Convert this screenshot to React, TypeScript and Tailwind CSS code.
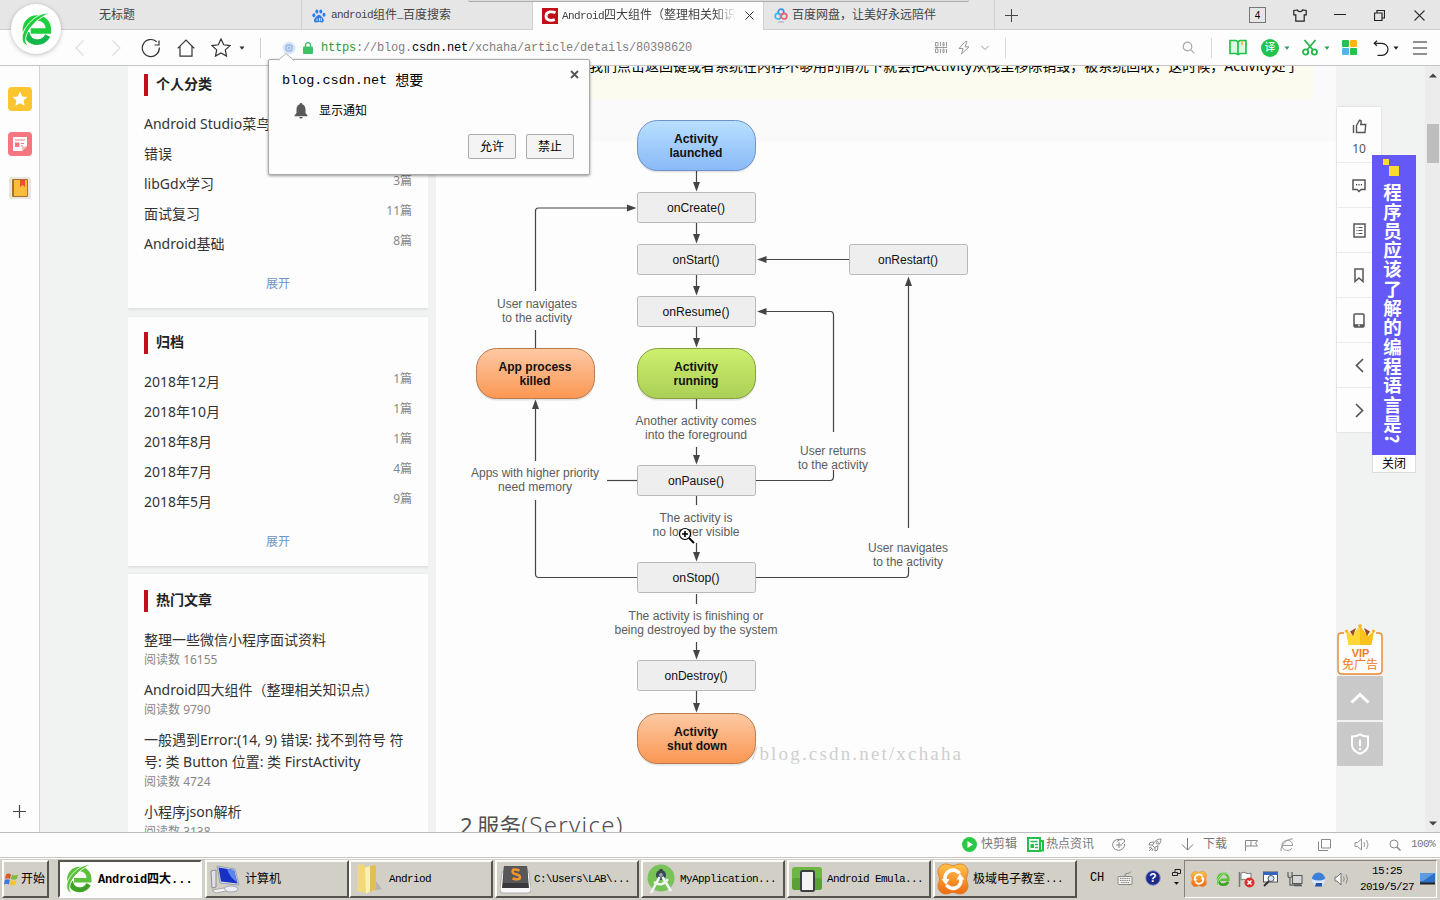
import React from 'react';

const SONG = 'font-["Liberation_Mono","Noto_Sans_CJK_SC",monospace]';
const YAHEI = 'font-["Noto_Sans","Noto_Sans_CJK_SC",sans-serif]';

function Caret({ className = 'text-[#333]' }: { className?: string }) {
  return (
    <svg width="6" height="4" viewBox="0 0 6 4" className={`shrink-0 ${className}`}>
      <path d="M0.5 0.5h5L3 3.8z" fill="currentColor" />
    </svg>
  );
}

/* ---------- logos ---------- */

function Browser360({ size, light = '#2bc83c', dark = '#12b04a' }: { size: number; light?: string; dark?: string }) {
  return (
    <svg width={size} height={size} viewBox="0 0 36 36" className="shrink-0" fill="none">
      <path d="M29.5 24.5C27 29 23 31 18.500 31C11.500 31 6.500 25.500 6.500 18.500C6.500 11.500 11.500 6 18.500 6C25.500 6 30.500 11 30.300 19.500H12" stroke={light} strokeWidth="5.500" />
      <path d="M8 21c1 6 5 10 11 10c4.500 0 8-2 10.500-6.500" stroke={dark} strokeWidth="5.500" />
      <path d="M31 1.500C22-1 6 12 3.500 24C2.500 30 4.500 34 9.500 34.500C6.500 32 6 28 8 23C12 13 22 5 31 1.500z" fill={light} stroke="#fff" strokeWidth="1" />
    </svg>
  );
}

function Paw() {
  return (
    <svg width="14" height="14" viewBox="0 0 14 14" fill="#2f7be8" className="shrink-0">
      <ellipse cx="1.900" cy="6.300" rx="1.500" ry="2" />
      <ellipse cx="4.800" cy="2.600" rx="1.500" ry="2.100" />
      <ellipse cx="8.800" cy="2.500" rx="1.500" ry="2.100" />
      <ellipse cx="12" cy="5.800" rx="1.500" ry="2" />
      <path d="M7 5.800c1.500 0 2.200 1.500 3.400 2.600c2.200 2 1.800 5-.8 5.100c-1.300 0-1.500-.4-2.600-.4s-1.500.4-2.700.4c-2.800 0-3.100-3-.8-5.100C4.700 7.300 5.500 5.800 7 5.800z" />
      <path d="M5 9.500v2.600M7.500 9v3M9.300 9v3" stroke="#fff" strokeWidth=".8" />
    </svg>
  );
}

function Polar({ size }: { size: number }) {
  return (
    <svg width={size} height={size} viewBox="0 0 32 32" className="shrink-0">
      <defs>
        <linearGradient id="pol" x1="0" y1="0" x2="0" y2="1">
          <stop offset="0" stopColor="#ffc24a" />
          <stop offset="1" stopColor="#ef6a12" />
        </linearGradient>
      </defs>
      <path d="M9 1c3 0 4 1.500 7 1.500S20 1 23 1c5 0 8 4 8 8c0 3-1.500 4-1.500 7s1.500 4 1.500 7c0 5-4 8-8 8c-3 0-4-1.500-7-1.500S12 31 9 31c-5 0-8-4-8-8c0-3 1.500-4 1.500-7S1 12 1 9c0-5 4-8 8-8z" fill="url(#pol)" stroke="#e0761a" strokeWidth=".8" />
      <path d="M22.500 10.500A8 8 0 0 0 8.500 18" fill="none" stroke="#fff" strokeWidth="3.600" />
      <path d="M9.500 22A8 8 0 0 0 23.500 14.500" fill="none" stroke="#fff" strokeWidth="3.600" />
      <path d="M4.500 16h8l-3.500 6zM27.500 16.500h-8l3.500-6z" fill="#fff" />
    </svg>
  );
}

/* ---------- tab strip ---------- */

function TabStrip() {
  return (
    <div className="flex h-[30px] shrink-0 items-stretch bg-[#e6e6e6] text-[12px] text-[#444]">
      <div className={`flex w-[302px] items-center border-r border-b border-[#d0d0d0] pt-[2px] pl-[99px] ${SONG}`}>无标题</div>
      <div className={`flex w-[231px] items-center border-r border-b border-[#d0d0d0] pt-[2px] pl-[10px] ${SONG}`}>
        <Paw />
        <span className="ml-[5px] text-[11px] tracking-[-0.600px]">android</span>组件
        <span className="text-[11px] tracking-[-0.600px]">_</span>百度搜索
      </div>
      <div className={`flex w-[230px] items-center bg-[#fdfdfd] pt-[1px] pl-[9px] ${SONG}`}>
        <svg width="16" height="16" viewBox="0 0 16 16" className="shrink-0">
          <rect width="16" height="16" fill="#c01018" />
          <path d="M13.500 4.800C11 3.300 4 3 4 8.200C4 13 10 12.700 12.800 11.600" fill="none" stroke="#fff" strokeWidth="2.800" />
        </svg>
        <div className="ml-1 flex w-[174px] items-center overflow-hidden pt-px whitespace-nowrap [mask-image:linear-gradient(to_right,black_88%,transparent)]">
          <span className="text-[11px] tracking-[-0.600px]">Android</span>四大组件（整理相关知识
        </div>
        <svg width="9" height="9" viewBox="0 0 9 9" className="ml-[9px] shrink-0"><path d="M.5.5l8 8M8.500.5l-8 8" stroke="#333" /></svg>
      </div>
      <div className={`flex w-[232px] items-center border-r border-b border-l border-[#d0d0d0] pt-[2px] pl-[10px] ${SONG}`}>
        <svg width="14" height="15" viewBox="0 0 14 15" className="shrink-0" fill="none" strokeWidth="1.700">
          <circle cx="7" cy="4" r="2.800" stroke="#3d8fe8" />
          <circle cx="4" cy="8.200" r="2.800" stroke="#39b8e8" />
          <circle cx="10" cy="8.200" r="2.800" stroke="#ee5c78" />
          <path d="M4 14h6" stroke="#9aa8bb" strokeWidth="1" />
        </svg>
        <span className="ml-1">百度网盘，让美好永远陪伴</span>
      </div>
      <div className="flex flex-1 items-center justify-between border-b border-[#d0d0d0] pt-px pr-[15px] pl-[10px]">
        <svg width="13" height="13" viewBox="0 0 13 13"><path d="M6.500 0v13M0 6.500h13" stroke="#444" /></svg>
        <div className="flex items-center">
          <div className="flex h-4 w-[17px] items-center justify-center border border-[#777] font-['Liberation_Sans'] text-[10px] text-black">4</div>
          <svg width="14" height="13" viewBox="0 0 14 13" className="ml-[27px]" fill="none" stroke="#222" strokeWidth="1.200"><path d="M4.500 1L.8 1.500v4.300h2v6.400h8.400V5.800h2V1.500L9.500 1C9 3.200 5 3.200 4.500 1z" /></svg>
          <svg width="12" height="12" viewBox="0 0 12 12" className="ml-[27px]"><path d="M0 5.500h12" stroke="#222" /></svg>
          <svg width="11" height="11" viewBox="0 0 11 11" className="ml-[28px]" fill="none" stroke="#222"><path d="M.5 3h7.500v7.500H.5zM3 3V.5h7.500V8H8" strokeWidth="1.200" /></svg>
          <svg width="11" height="11" viewBox="0 0 11 11" className="ml-[29px]"><path d="M.5.5l10 10M10.500.5l-10 10" stroke="#333" strokeWidth="1.100" /></svg>
        </div>
      </div>
    </div>
  );
}

/* ---------- address bar ---------- */

function AddressBar() {
  return (
    <div className="flex h-[36px] shrink-0 items-center border-b border-[#c4c4c4] bg-[#fdfdfd] pl-[75px]">
      <svg width="9" height="16" viewBox="0 0 9 16" fill="none" stroke="#dcdcdc" strokeWidth="1.200"><path d="M8.500.5L1 8l7.500 7.500" /></svg>
      <svg width="9" height="16" viewBox="0 0 9 16" fill="none" stroke="#dcdcdc" strokeWidth="1.200" className="ml-[28px]"><path d="M.5.5L8 8L.5 15.500" /></svg>
      <svg width="20" height="20" viewBox="0 0 20 20" fill="none" stroke="#333" strokeWidth="1.200" className="ml-[20px]"><path d="M18.300 9.500A8.500 8.500 0 1 1 15.600 3.800" /><path d="M18 2.500v4.500h-4.500" /></svg>
      <svg width="18" height="18" viewBox="0 0 18 18" fill="none" stroke="#333" strokeWidth="1.200" className="ml-[16px]"><path d="M.7 9.300L9 1l8.300 8.300M3 7.500v9.700h12V7.500" /></svg>
      <svg width="20" height="19" viewBox="0 0 20 19" fill="none" stroke="#333" strokeWidth="1.200" className="ml-[16px]"><path d="M10 1l2.700 5.800l6.300.8l-4.700 4.300l1.200 6.200L10 15l-5.500 3.100l1.200-6.200L1 7.600l6.300-.8z" /></svg>
      <Caret className="ml-[8px] text-[#333]" />
      <div className="ml-[15px] h-5 w-px bg-[#d0d0d0]" />
      <svg width="14" height="14" viewBox="0 0 14 14" className="ml-[21px] shrink-0"><circle cx="7" cy="7" r="6.500" fill="#dbe6f5" /><circle cx="7" cy="7" r="4" fill="#9fbfea" /><circle cx="7" cy="7" r="2" fill="none" stroke="#d5e3f6" /></svg>
      <svg width="10" height="12" viewBox="0 0 10 12" className="ml-[7px] shrink-0"><path d="M2.500 5V3.200a2.500 2.500 0 0 1 5 0V5" fill="none" stroke="#3fb765" strokeWidth="1.300" /><rect y="4.500" width="10" height="7.500" rx="1" fill="#3fc167" /></svg>
      <div className="ml-[8px] w-[611px] pt-px font-['Liberation_Mono'] text-[12px] tracking-[-0.200px] whitespace-nowrap text-[#808080]">
        <span className="text-[#2c9a3b]">https</span>://blog.<span className="text-black">csdn.net</span>/xchaha/article/details/80398620
      </div>
      <svg width="12" height="11" viewBox="0 0 12 11" className="ml-[3px] shrink-0" fill="none" stroke="#999"><path d="M.5.500h2.500v3.500H.5zM5.500 0v4M8 .5h1v3.500H8zM11.500 0v4.500M0 5.500h12M.5 7h2.500v3.500H.5zM5.500 7V11M8 7h1v3.500H8zM11.500 7V11" /></svg>
      <svg width="12" height="14" viewBox="0 0 12 14" className="ml-[11px] shrink-0" fill="none" stroke="#999"><path d="M7 .7L1 7.500h4L3.500 13L11 5.800H7L9 .7z" /></svg>
      <svg width="8" height="6" viewBox="0 0 8 6" className="ml-[11px] shrink-0" fill="none" stroke="#999"><path d="M.5 1L4 4.500L7.500 1" /></svg>
      <div className="ml-[16px] h-5 w-px bg-[#d8d8d8]" />
      <svg width="13" height="13" viewBox="0 0 13 13" className="ml-[176px] shrink-0" fill="none" stroke="#aaa" strokeWidth="1.200"><circle cx="5.500" cy="5.500" r="4.300" /><path d="M8.800 8.800L12.300 12.300" /></svg>
      <div className="ml-[16px] h-5 w-px bg-[#d8d8d8]" />
      <svg width="18" height="17" viewBox="0 0 18 17" className="ml-[17px] shrink-0" fill="#dff7e3" stroke="#22c24c" strokeWidth="1.700"><path d="M1 1.500h6l2 1.300l2-1.300h6v13h-6l-2 1l-2-1H1zM9 3v12" /><path d="M13 2v4" stroke="#f5b73c" /></svg>
      <div className={`ml-[14px] flex h-[18px] w-[18px] shrink-0 items-center justify-center rounded-full bg-[#22c24c] pt-px text-[11px] leading-none text-white ${SONG}`}>译</div>
      <Caret className="ml-[5px] text-[#2a9b54]" />
      <svg width="16" height="17" viewBox="0 0 16 17" className="ml-[12px] shrink-0" fill="none" stroke="#22b84a" strokeWidth="1.800"><circle cx="3.600" cy="13" r="2.600" /><circle cx="12.400" cy="13" r="2.600" /><path d="M5 11L13.500 1M11 11L2.500 1" /></svg>
      <Caret className="ml-[6px] text-[#2a9b54]" />
      <div className="ml-[12px] grid shrink-0 grid-cols-2 gap-px">
        <div className="h-[7px] w-[7px] rounded-[1px] bg-[#22c24c]" />
        <div className="h-[7px] w-[7px] rounded-[1px] bg-[#fcb713]" />
        <div className="h-[7px] w-[7px] rounded-[1px] bg-[#52b4ea]" />
        <div className="h-[7px] w-[7px] rounded-[1px] bg-[#22c24c]" />
      </div>
      <svg width="16" height="16" viewBox="0 0 16 16" className="ml-[16px] shrink-0" fill="none" stroke="#222" strokeWidth="1.200"><path d="M1.500 3.300H9a6 6 0 0 1 0 12H4.500M4 .8L1.200 3.300L4 5.800" /></svg>
      <Caret className="ml-[4px] text-[#222]" />
      <svg width="14" height="14" viewBox="0 0 14 14" className="ml-[14px] shrink-0" stroke="#222" strokeWidth="1.200"><path d="M0 1h14M0 7h14M0 13h14" /></svg>
    </div>
  );
}

/* ---------- left tool rail ---------- */

function LeftRail() {
  return (
    <div className="flex w-10 shrink-0 flex-col items-center border-r border-[#d2d2d2] bg-[#fdfdfd] pt-[21px] pb-[14px]">
      <svg width="24" height="24" viewBox="0 0 24 24"><rect width="24" height="24" rx="4" fill="#fbc52f" /><path d="M12 4.500l2.200 4.900l5.300.6l-3.900 3.600l1.100 5.200L12 16.200l-4.700 2.600l1.100-5.200L4.500 10l5.300-.6z" fill="#fff" /></svg>
      <svg width="24" height="24" viewBox="0 0 24 24" className="mt-[21px]"><rect width="24" height="24" rx="4" fill="#f67680" /><path d="M5 5h14v9l-5 5H5z" fill="#fff" /><path d="M7 8h10M13 11.500h3M13 14h2" stroke="#f67680" strokeWidth="1.200" /><rect x="7" y="10.500" width="4.500" height="4.500" fill="#f67680" /><path d="M14 19v-4.500h5" fill="#fbb" /></svg>
      <svg width="22" height="22" viewBox="0 0 22 22" className="mt-[21px]"><rect width="22" height="22" rx="3" fill="#e8e6e2" /><rect x="3" y="2" width="16" height="18" rx="1" fill="#a8722c" /><rect x="5" y="3" width="13" height="16" fill="#f9bd3a" /><path d="M11 3h5v7l-2.500-2L11 10z" fill="#ef4d2e" /></svg>
      <svg width="13" height="13" viewBox="0 0 13 13" className="mt-auto"><path d="M6.500 0v13M0 6.500h13" stroke="#444" strokeWidth="1.200" /></svg>
    </div>
  );
}

/* ---------- blog side column ---------- */

function CardTitle({ children }: { children: React.ReactNode }) {
  return (
    <div className="flex h-[22px] items-center border-l-4 border-[#c0101c] pb-[3px] pl-2 text-[14px] font-bold text-[#222]">{children}</div>
  );
}

function CountRow({ label, count }: { label: string; count: string }) {
  return (
    <div className="flex h-[30px] justify-between whitespace-nowrap">
      <span className="text-[14px] leading-[30px] text-[#333]">{label}</span>
      <span className="text-[12px] leading-[24px] text-[#888]">{count}</span>
    </div>
  );
}

const categories: [string, string][] = [
  ['Android Studio菜鸟', '6篇'],
  ['错误', '2篇'],
  ['libGdx学习', '3篇'],
  ['面试复习', '11篇'],
  ['Android基础', '8篇'],
];
const archive: [string, string][] = [
  ['2018年12月', '1篇'],
  ['2018年10月', '1篇'],
  ['2018年8月', '1篇'],
  ['2018年7月', '4篇'],
  ['2018年5月', '9篇'],
];
const hot: [string, string][] = [
  ['整理一些微信小程序面试资料', '16155'],
  ['Android四大组件（整理相关知识点）', '9790'],
  ['一般遇到Error:(14, 9) 错误: 找不到符号 符号: 类 Button 位置: 类 FirstActivity', '4724'],
  ['小程序json解析', '3138'],
];

const CARD = 'bg-[#fdfdfd] px-4 shadow-[0_1px_3px_rgba(0,0,0,0.12)] shrink-0';

function BlogSide() {
  return (
    <div className={`flex h-[766px] w-[300px] shrink-0 flex-col overflow-hidden ${YAHEI}`}>
      <div className={`${CARD} h-[242px] pt-[8px]`}>
        <CardTitle>个人分类</CardTitle>
        <div className="mt-[13px]">{categories.map(([l, c]) => <CountRow key={l} label={l} count={c} />)}</div>
        <div className="mt-[16px] text-center text-[12px] leading-[18px] text-[#6d94c4]">展开</div>
      </div>
      <div className={`${CARD} mt-[9px] h-[249px] pt-[15px]`}>
        <CardTitle>归档</CardTitle>
        <div className="mt-[13px]">{archive.map(([l, c]) => <CountRow key={l} label={l} count={c} />)}</div>
        <div className="mt-[16px] text-center text-[12px] leading-[18px] text-[#6d94c4]">展开</div>
      </div>
      <div className={`${CARD} mt-[8px] h-[280px] pt-[16px]`}>
        <CardTitle>热门文章</CardTitle>
        <div className="mt-[17px]">
          {hot.map(([t, n]) => (
            <div key={n} className="mb-[10px]">
              <div className="text-[14px] leading-[22px] text-[#333]">{t}</div>
              <div className="text-[12px] leading-[18px] text-[#888]">阅读数 {n}</div>
            </div>
          ))}
        </div>
      </div>
    </div>
  );
}

/* ---------- lifecycle diagram ---------- */

function Box({ cx = 696.5, y, label, w }: { cx?: number; y: number; label: string; w: number }) {
  return (
    <g>
      <rect x={cx - 59} y={y + 0.5} width="118" height="30" rx="2" fill="#eeeeef" stroke="#b9b9b9" />
      <text x={cx - 0.5} y={y + 20} textAnchor="middle" fill="#111" textLength={w} lengthAdjust="spacingAndGlyphs">{label}</text>
    </g>
  );
}

function Pill({ cx = 696.5, y, fill, stroke, lines }: { cx?: number; y: number; fill: string; stroke: string; lines: [string, number][] }) {
  return (
    <g fontWeight="bold">
      <rect x={cx - 59} y={y + 2.5} width="118" height="50" rx="20" fill="#000" opacity=".1" />
      <rect x={cx - 59} y={y + 0.5} width="118" height="50" rx="20" fill={`url(#${fill})`} stroke={stroke} />
      {lines.map(([t, w], i) => (
        <text key={t} x={cx - 0.5 + (t === 'shut down' ? 1 : 0)} y={y + 23 + i * 14} textAnchor="middle" fill="#111" textLength={w} lengthAdjust="spacingAndGlyphs">{t}</text>
      ))}
    </g>
  );
}

function Note({ x, y, lines }: { x: number; y: number; lines: [string, number][] }) {
  return (
    <>
      {lines.map(([t, w], i) => (
        <text key={t} x={x} y={y + i * 14} textAnchor="middle" fill="#5c5c5c" textLength={w} lengthAdjust="spacingAndGlyphs">{t}</text>
      ))}
    </>
  );
}

const downArrows: [number, number][] = [[171, 191], [223, 243], [275, 295], [327, 347], [447, 464], [543, 561], [642, 659], [691, 712]];
const plainLines: [number, number][] = [[399, 409], [496, 505], [594, 604]];

function Lifecycle() {
  return (
    <svg width="900" height="690" viewBox="436 105 900 690" className="shrink-0 font-['Liberation_Sans']" fontSize="12">
      <defs>
        <linearGradient id="gBlue" x1="0" y1="0" x2="0" y2="1"><stop offset="0" stopColor="#b9e0fe" /><stop offset="1" stopColor="#89b9f8" /></linearGradient>
        <linearGradient id="gGreen" x1="0" y1="0" x2="0" y2="1"><stop offset="0" stopColor="#cdf06f" /><stop offset="1" stopColor="#abce56" /></linearGradient>
        <linearGradient id="gOrange" x1="0" y1="0" x2="0" y2="1"><stop offset="0" stopColor="#fdc9a4" /><stop offset="1" stopColor="#fb9753" /></linearGradient>
      </defs>
      <rect x="436" y="105" width="900" height="37" fill="#fafafa" />
      <g stroke="#444" fill="none" strokeWidth="1.200">
        {downArrows.map(([a, b]) => <path key={a} d={`M696.500 ${a}V${b - 6}`} />)}
        {plainLines.map(([a, b]) => <path key={a} d={`M696.500 ${a}V${b}`} />)}
        <path d="M535.500 348V330M535.500 291V211q0-3 3-3H628" />
        <path d="M637 577.500H539q-3.500 0-3.500-3.500V500M535.500 461V408" />
        <path d="M607 480.500h30" />
        <path d="M756 480.500h74q3.500 0 3.500-4V470M833.500 432V315q0-3.500-3-3.500H765" />
        <path d="M849 259.500H765" />
        <path d="M756 577.500h149q3.500 0 3.500-4V567M908.500 528V284" />
      </g>
      <g fill="#444">
        {downArrows.map(([a, b]) => <path key={a} d={`M693 ${b - 9}h7l-3.500 9.500z`} />)}
        <path d="M627 204.500v7l9.500-3.500zM766.500 256v7l-9.500-3.500zM766.500 308v7l-9.500-3.500zM532 409h7l-3.500-9.500zM905 286h7l-3.500-9.500z" />
      </g>
      <Pill y={120} fill="gBlue" stroke="#6f93c9" lines={[['Activity', 44], ['launched', 53]]} />
      <Box y={192} label="onCreate()" w={58} />
      <Box y={244} label="onStart()" w={47} />
      <Box y={296} label="onResume()" w={67} />
      <Box cx={908.5} y={244} label="onRestart()" w={60} />
      <Pill y={348} fill="gGreen" stroke="#83a043" lines={[['Activity', 44], ['running', 45]]} />
      <Pill cx={535.5} y={348} fill="gOrange" stroke="#b97a50" lines={[['App process', 73], ['killed', 31]]} />
      <Box y={465} label="onPause()" w={56} />
      <Box y={562} label="onStop()" w={47} />
      <Box y={660} label="onDestroy()" w={63} />
      <text x="752" y="760" fontSize="19" fill="#cfcfcf" className="font-['Liberation_Serif']" textLength="209">/blog.csdn.net/xchaha</text>
      <Pill y={713} fill="gOrange" stroke="#b97a50" lines={[['Activity', 44], ['shut down', 60]]} />
      <Note x={537} y={308} lines={[['User navigates', 80], ['to the activity', 70]]} />
      <Note x={696} y={425} lines={[['Another activity comes', 121], ['into the foreground', 102]]} />
      <Note x={833} y={455} lines={[['User returns', 66], ['to the activity', 70]]} />
      <Note x={535} y={477} lines={[['Apps with higher priority', 128], ['need memory', 74]]} />
      <Note x={696} y={522} lines={[['The activity is', 73], ['no longer visible', 87]]} />
      <Note x={908} y={552} lines={[['User navigates', 80], ['to the activity', 70]]} />
      <Note x={696} y={620} lines={[['The activity is finishing or', 135], ['being destroyed by the system', 163]]} />
      <g>
        <path d="M689 538l5 5" stroke="#fff" strokeWidth="4" />
        <circle cx="685" cy="534" r="5.500" fill="#fff" stroke="#000" strokeWidth="1.200" />
        <path d="M682 534h6M685 531v6" stroke="#000" strokeWidth="1.600" />
        <path d="M689 538l5 5" stroke="#000" strokeWidth="2" />
      </g>
    </svg>
  );
}

function Article() {
  return (
    <div className={`flex h-[766px] w-[900px] shrink-0 flex-col overflow-hidden bg-[#fdfdfd] ${YAHEI}`}>
      <div className="h-[39px] shrink-0 bg-[#fafafa] pr-[23px]">
        <div className="flex h-[34px] items-start overflow-hidden bg-[#fbfcef] pl-[153px] text-[14px] leading-[20px] whitespace-nowrap text-black">
          <span className="-mt-[10px]">我们点击返回键或者系统在内存不够用的情况下就会把Activity从栈里移除销毁，被系统回收，这时候，Activity处于</span>
        </div>
      </div>
      <Lifecycle />
      <div className="-mt-px shrink-0 pt-[15px] pl-6 text-[22px] leading-[32px] text-[#505050]">
        2 <span className="-ml-px">服务</span><span className="text-[24px] font-light tracking-[1.300px]">(Service)</span>
      </div>
    </div>
  );
}

/* ---------- right rail ---------- */

const railIcons = [
  <svg key="c" width="14" height="14" viewBox="0 0 14 14" fill="none" stroke="#555" strokeWidth="1.500"><path d="M1 1h12v9.500H9l-2 2L5 10.500H1z" /><path d="M4 5.800h1.200M6.400 5.800h1.200M8.800 5.800H10" /></svg>,
  <svg key="l" width="13" height="15" viewBox="0 0 13 15" fill="none" stroke="#555" strokeWidth="1.500"><rect x="1" y="1" width="11" height="13" /><path d="M3.500 4.500h1M5.500 4.500h4M3.500 7.500h1M5.500 7.500h4M3.500 10.500h1M5.500 10.500h4" strokeWidth="1.200" /></svg>,
  <svg key="b" width="10" height="15" viewBox="0 0 10 15" fill="none" stroke="#555" strokeWidth="1.500"><path d="M1 1h8v12.500L5 10l-4 3.500z" /></svg>,
  <svg key="p" width="12" height="15" viewBox="0 0 12 15" fill="none" stroke="#555" strokeWidth="1.500"><rect x="1" y="1" width="10" height="13" rx="1" /><path d="M1 12.500h10" strokeWidth="2.500" /><path d="M5.300 12.500h1.400" stroke="#fff" /></svg>,
  <svg key="<" width="9" height="15" viewBox="0 0 9 15" fill="none" stroke="#555" strokeWidth="1.700"><path d="M8 1L1.500 7.500L8 14" /></svg>,
  <svg key=">" width="9" height="15" viewBox="0 0 9 15" fill="none" stroke="#555" strokeWidth="1.700"><path d="M1 1l6.500 6.500L1 14" /></svg>,
];

function RightRail() {
  return (
    <div className="flex h-[766px] flex-1 flex-col pt-[41px] pl-px">
      <div className="flex w-[44px] flex-col bg-[#fdfdfd] shadow-[0_0_2px_rgba(0,0,0,0.15)]">
        <div className="flex h-[55px] flex-col items-center pt-[12px]">
          <svg width="15" height="15" viewBox="0 0 15 15" fill="none" stroke="#555" strokeWidth="1.400"><path d="M4.500 6.500L7.500 1.200c1.500 0 2 .8 1.700 2L8.700 5.500h5L13 13.500H4.500zM1.500 6v8" /></svg>
          <span className={`mt-[6px] text-[12px] leading-[18px] text-[#555] ${YAHEI}`}>10</span>
        </div>
        {railIcons.map((ic, i) => (
          <div key={i} className="flex h-[45px] items-center justify-center border-t border-[#ececec] pt-px">{ic}</div>
        ))}
      </div>
      <svg width="46" height="51" viewBox="0 0 46 51" className="mt-[192px]">
        <path d="M7 9H4.500Q1 9 1 12.500V46q0 4 4 4H41q4 0 4-4V12.500Q45 9 41.500 9H39" fill="#fdfdfd" stroke="#e8872a" strokeWidth="1.400" />
        <path d="M9 7l6 5l8-10l8 10l6-5l-2.500 14h-23z" fill="#fcc21c" />
        <path d="M10 7l6 4.500L23 2v19H11.500z" fill="#fdd835" />
        <path d="M13 7.500l6-3.500l-3 8zM33 7.500l-6-3.500l3 8z" fill="#9c4a24" />
        <circle cx="9.500" cy="7" r="1.600" fill="#fbb01a" /><circle cx="23" cy="2" r="1.800" fill="#fbb01a" /><circle cx="36.500" cy="7" r="1.600" fill="#fbb01a" />
        <text x="23.500" y="32.500" textAnchor="middle" fontSize="11" fontWeight="bold" fill="#ee7d22" className="font-['Liberation_Sans']">VIP</text>
        <text x="23" y="44.500" textAnchor="middle" fontSize="12" fill="#ee7d22" className="font-['Noto_Sans_CJK_SC']">免广告</text>
      </svg>
      <div className="mt-[1px] flex h-[44px] w-[46px] items-center justify-center bg-[#c9c9c9]">
        <svg width="20" height="12" viewBox="0 0 20 12" fill="none" stroke="#fff" strokeWidth="3"><path d="M1.500 10.500L10 2.500l8.500 8" /></svg>
      </div>
      <div className="mt-[2px] flex h-[44px] w-[46px] items-center justify-center bg-[#c9c9c9]">
        <svg width="20" height="22" viewBox="0 0 20 22" fill="none" stroke="#fff" strokeWidth="2"><path d="M10 1.300c2.500 1.700 5 2.200 8 2.200V12c0 4-3.500 7-8 8.700C5.500 19 2 16 2 12V3.500c3 0 5.500-.5 8-2.200zM10 6.500v7M10 15v2" /></svg>
      </div>
    </div>
  );
}

function SideAd() {
  return (
    <div className="absolute top-[155px] left-[1372px] flex w-[44px] flex-col">
      <div className="flex h-[300px] flex-col items-center bg-[#6459f6] pt-[3px] pr-[3px]">
        <svg width="18" height="18" viewBox="0 0 18 18" className="mr-[4px]" fill="#fbdc2e"><rect x="1" y="1" width="6" height="6" /><rect x="7" y="8" width="10" height="10" /></svg>
        <div className={`mt-[7px] font-["Noto_Sans_CJK_SC"] text-[18.500px] leading-[22px] font-bold tracking-[0.800px] whitespace-nowrap text-white [writing-mode:vertical-rl]`}>程序员应该了解的编程语言是?</div>
      </div>
      <div className={`flex h-[18px] items-center justify-center border border-t-0 border-[#ddd] bg-white pt-[2px] text-[12px] text-black ${SONG}`}>关闭</div>
    </div>
  );
}

function Scrollbar() {
  return (
    <div className="flex w-[15px] shrink-0 flex-col items-center justify-between bg-[#ececec] pt-[7px] pb-[6px]">
      <div className="flex flex-col items-center">
        <svg width="8" height="5" viewBox="0 0 8 5"><path d="M0 4.500h8L4 .5z" fill="#444" /></svg>
        <div className="mt-[46px] h-[39px] w-[12px] bg-[#bebebe]" />
      </div>
      <svg width="8" height="5" viewBox="0 0 8 5"><path d="M0 .5h8L4 4.500z" fill="#444" /></svg>
    </div>
  );
}

/* ---------- permission popup ---------- */

function PermissionPopup() {
  return (
    <div className={`absolute top-[59px] left-[268px] flex h-[116px] w-[322px] flex-col rounded-[2px] border border-[#aaa] bg-[#fdfdfd] text-black shadow-[0_1px_3px_rgba(0,0,0,0.4)] ${SONG}`}>
      <svg width="16" height="8" viewBox="0 0 16 8" className="absolute -top-[7px] left-[9px]"><path d="M0 7.500L8 .5l8 7" fill="#fdfdfd" stroke="#b5b5b5" /></svg>
      <div className="flex h-[42px] justify-between pr-[10px] pl-[13px]">
        <div className="flex items-center text-[14px]">
          <span className="text-[13.500px] tracking-[-0.010px] whitespace-pre">blog.csdn.net </span>
          <span>想要</span>
        </div>
        <svg width="9" height="9" viewBox="0 0 9 9" className="mt-[10px]"><path d="M1 1l7 7M8 1L1 8" stroke="#555" strokeWidth="1.800" /></svg>
      </div>
      <div className="flex h-[18px] items-center pl-[25px] text-[12px]">
        <svg width="14" height="16" viewBox="0 0 14 16" fill="#595959"><path d="M7 0c1 0 1.300.7 1.300 1.300C10.500 2 11.500 4 11.500 6.500V10l2 2.500v.7H.5v-.7L2.500 10V6.500C2.500 4 3.500 2 5.700 1.300C5.700.7 6 0 7 0zM5.300 14h3.400c0 2-3.400 2-3.400 0z" /></svg>
        <span className="ml-[11px] pt-px">显示通知</span>
      </div>
      <div className="mt-[14px] flex justify-end gap-[10px] pr-[15px] text-[12px]">
        <div className="flex h-[25px] w-[48px] items-center justify-center rounded-[2px] border border-[#aaa] bg-[#f4f4f4] pt-[2px]">允许</div>
        <div className="flex h-[25px] w-[48px] items-center justify-center rounded-[2px] border border-[#aaa] bg-[#f4f4f4] pt-[2px]">禁止</div>
      </div>
    </div>
  );
}

/* ---------- browser status bar ---------- */

function StatusBar() {
  return (
    <div className={`flex h-[24px] shrink-0 items-center border-t border-[#bdbdbd] bg-[#fdfdfd] pl-[962px] text-[12px] text-[#777] ${SONG}`}>
      <svg width="15" height="15" viewBox="0 0 15 15" className="shrink-0"><circle cx="7.500" cy="7.500" r="7.500" fill="#2ac945" /><path d="M5.500 4v7l5.500-3.500z" fill="#fff" /></svg>
      <span className="ml-[4px] w-[36px] shrink-0 pt-px">快剪辑</span>
      <svg width="17" height="15" viewBox="0 0 17 15" className="ml-[10px] shrink-0"><path d="M1 1h12v13H1zM13 4h3v9.500H13" fill="none" stroke="#23bf48" strokeWidth="2" /><path d="M3.500 4.500h7M8 7.500h3M8 10.500h3" stroke="#23bf48" strokeWidth="1.300" /><rect x="3.500" y="7" width="3.500" height="4" fill="#23bf48" /></svg>
      <span className="ml-[2px] w-[48px] shrink-0 pt-px">热点资讯</span>
      <svg width="14" height="14" viewBox="0 0 14 14" className="ml-[18px] shrink-0" fill="none" stroke="#888"><path d="M9.500 2A6 5.500 0 1 0 12.500 6M5 3.500q5-4 7.500-1.500q1 2-2.500 4M7 4v6M4 7h6" /></svg>
      <svg width="14" height="14" viewBox="0 0 14 14" className="ml-[22px] shrink-0" fill="none" stroke="#888"><path d="M13 1C9 1 6 3.500 4.500 7.500L6.500 9.500C10.500 8 13 5 13 1zM6 4L2 4.500L1 7h3.500M10 8l-.5 4L7 13V9.500M1 10l2.500-1M4 13l1-2.500M1 13l3-3" /><circle cx="9.300" cy="4.700" r="1.200" /></svg>
      <svg width="13" height="13" viewBox="0 0 13 13" className="ml-[19px] shrink-0" fill="none" stroke="#777"><path d="M6.500 0v12M1 6.500L6.500 12L12 6.500" /></svg>
      <span className="ml-[9px] w-[24px] shrink-0 pt-px">下载</span>
      <svg width="13" height="12" viewBox="0 0 13 12" className="ml-[18px] shrink-0" fill="none" stroke="#888"><path d="M.5 12V1.500H6V7H.5M6 1.500h6.500L10.500 4.200l2 2.800H6" /></svg>
      <svg width="14" height="14" viewBox="0 0 14 14" className="ml-[22px] shrink-0" fill="none" stroke="#999"><path d="M3 7.500h9.500C12.500 0 1.500 1 2 8c.5 5 8 6 10 2M13 1C8 0 0 7 1 13" /></svg>
      <svg width="13" height="12" viewBox="0 0 13 12" className="ml-[24px] shrink-0" fill="none" stroke="#888"><path d="M3.500.5h9v8.500h-9zM.5 2.500v9H10" /></svg>
      <svg width="15" height="13" viewBox="0 0 15 13" className="ml-[23px] shrink-0" fill="none" stroke="#999"><path d="M1 4.500v4h2.500l4 3.500V1l-4 3.500zM10 4q1.500 2.500 0 5M12.500 2q3 4.500 0 9" /></svg>
      <svg width="12" height="12" viewBox="0 0 12 12" className="ml-[20px] shrink-0" fill="none" stroke="#888"><circle cx="5" cy="5" r="4" /><path d="M8 8l3.500 3.500" strokeWidth="1.500" /></svg>
      <span className="ml-[10px] text-[11px] tracking-[-0.600px]">100%</span>
    </div>
  );
}

/* ---------- Windows taskbar ---------- */

const RAISED = 'border-2 border-t-[#fcfcf8] border-l-[#fcfcf8] border-r-[#55534e] border-b-[#55534e] bg-[#d2cfc7]';

function TaskButton({ icon, pad, children }: { icon: React.ReactNode; pad: string; children: React.ReactNode }) {
  return (
    <div className={`flex h-[38px] w-[144px] shrink-0 items-center whitespace-nowrap ${RAISED} ${pad}`}>
      {icon}
      <div className="flex items-center pt-px">{children}</div>
    </div>
  );
}

const LATIN = 'text-[11px] tracking-[-0.600px]';

const computerIcon = (
  <svg width="30" height="30" viewBox="0 0 30 30" className="shrink-0">
    <path d="M1 7l5-1v17l-4 1z" fill="#e0e2e6" stroke="#8b8e95" />
    <path d="M7 2l18 3l4 16L10 19z" fill="#d6dbe4" stroke="#9aa0ac" />
    <path d="M8.500 3.500L24 6l3.500 13.500L11 17.500z" fill="#1731c4" />
    <path d="M17 5l7 1l3 12q-7-4-10-13z" fill="#5c86ee" />
    <ellipse cx="21" cy="25" rx="7" ry="3" fill="#eceef1" stroke="#a3a7af" />
    <path d="M2 26l12-2l2 3l-10 2z" fill="#f4f4f4" stroke="#aaa" />
  </svg>
);
const folderIcon = (
  <svg width="28" height="32" viewBox="0 0 28 32" className="shrink-0">
    <path d="M15 28l12-2l-7-9z" fill="#999" opacity=".5" />
    <path d="M2 2l5-1l4 3l9-2v25l-8 3L2 28z" fill="#f1d978" />
    <path d="M10 5l5-2v25l-4 3z" fill="#fbf0b4" /><path d="M15 3l6-1v24l-6 3z" fill="#e2bf54" />
  </svg>
);
const sublimeIcon = (
  <svg width="31" height="29" viewBox="0 0 31 29" className="shrink-0">
    <path d="M2 7h27l2 17q0 4-3 4H3q-3 0-3-4z" fill="#f8f8f8" stroke="#999" strokeWidth=".7" />
    <path d="M4 1h23l2 22H2z" fill="#3a3a3c" /><path d="M4 1h23l1 17H3z" fill="#58585a" />
    <path d="M19.500 5.500q-7-2.500-7 1q0 2 3.500 2.700q4 .8 4 3q0 3.500-7.500 1.300" fill="none" stroke="#f5952c" strokeWidth="2.400" />
  </svg>
);
const studioIcon = (
  <svg width="28" height="31" viewBox="0 0 28 31" className="shrink-0">
    <circle cx="14" cy="14" r="13.500" fill="#78c257" />
    <circle cx="14" cy="11" r="5" fill="#37474f" /><path d="M14 8v-3" stroke="#37474f" strokeWidth="3" />
    <path d="M12.500 13L4 29M15.500 13L24 27" stroke="#f1f4f4" strokeWidth="2.600" /><path d="M7 18q8 6 14-3" fill="none" stroke="#f1f4f4" strokeWidth="2.400" />
    <circle cx="14" cy="11" r="2" fill="#90a4ae" />
  </svg>
);
const emulatorIcon = (
  <svg width="30" height="28" viewBox="0 0 30 28" className="shrink-0">
    <rect y="2" width="30" height="23" rx="3" fill="#6db644" /><rect y="13" width="30" height="12" rx="3" fill="#5a9f38" />
    <rect x="9" y="6" width="13" height="20" rx="1.500" fill="#f3f3f3" stroke="#3b3f42" strokeWidth="2" />
  </svg>
);

function Taskbar() {
  return (
    <div className={`flex h-[43px] shrink-0 items-start border-t border-[#c8c6be] bg-[#d2cfc7] pt-[2px] pl-[2px] text-[12px] text-black shadow-[inset_0_1px_0_#fff] ${SONG}`}>
      <div className={`flex h-[38px] w-[47px] shrink-0 items-center whitespace-nowrap ${RAISED}`}>
        <svg width="15" height="15" viewBox="0 0 15 15" className="shrink-0">
          <path d="M2 2.500q3-2 5 0L6 7q-2.500-1.500-5 0z" fill="#e8532a" /><path d="M8 2.800q3 1.500 6-.3L12.800 7q-3 1.500-6 0z" fill="#7cb83a" />
          <path d="M.8 8q3-1.500 5 0l-1 4.500q-2.500-1.500-4.800 0z" fill="#3d7ad6" /><path d="M6.600 8q3 1.500 6 0l-1.200 4.500q-3 1.800-5.800 0z" fill="#f7c52b" />
        </svg>
        <span className="ml-[2px] pt-[2px]">开始</span>
      </div>
      <div className="ml-[9px] flex h-[38px] w-[144px] shrink-0 items-center border-2 border-t-[#55534e] border-r-[#fff] border-b-[#fff] border-l-[#55534e] bg-[#fdfdfb] pl-[4px] font-bold whitespace-nowrap">
        <Browser360 size={30} light="#5cc13a" dark="#3fa228" />
        <div className="ml-[4px] flex items-center pt-[2px]">
          <span className="tracking-[-0.200px]">Android</span>四大<span>...</span>
        </div>
      </div>
      <div className="ml-[3px] flex gap-0">
        <TaskButton icon={computerIcon} pad="pl-[3px]"><span className="ml-[5px] pt-px">计算机</span></TaskButton>
        <TaskButton icon={folderIcon} pad="pl-[4px]"><span className={`ml-[6px] ${LATIN}`}>Andriod</span></TaskButton>
      </div>
      <div className="ml-[2px] flex gap-[2px]">
        <TaskButton icon={sublimeIcon} pad="pl-[3px]"><span className={`ml-[3px] ${LATIN}`}>C:\Users\LAB\...</span></TaskButton>
        <TaskButton icon={studioIcon} pad="pl-[4px]"><span className={`ml-[5px] ${LATIN}`}>MyApplication...</span></TaskButton>
        <TaskButton icon={emulatorIcon} pad="pl-[3px]"><span className={`ml-[5px] ${LATIN}`}>Android Emula...</span></TaskButton>
        <TaskButton icon={<Polar size={32} />} pad="pl-[2px]"><span className="ml-[4px] pt-px">极域电子教室</span><span className={LATIN}>...</span></TaskButton>
      </div>
      <div className="ml-[13px] flex h-[35px] items-center">
        <span className="text-[12px] tracking-[-0.200px]">CH</span>
        <svg width="16" height="14" viewBox="0 0 16 14" className="ml-[13px]" fill="none" stroke="#8a8a85"><rect x="1" y="5.500" width="14" height="8" rx="1" fill="#eee" /><path d="M3 7.500h10M3 9.500h10M4 11.500h8" strokeDasharray="1.500 .7" /><path d="M8 5.500q-1-3 2-3t4-2" /></svg>
        <svg width="16" height="16" viewBox="0 0 16 16" className="ml-[12px]"><circle cx="8" cy="8" r="7.300" fill="#1b2a8c" stroke="#8c98cc" /><text x="8" y="12.200" textAnchor="middle" fontSize="12" fontWeight="bold" fill="#fff" className="font-['Liberation_Sans']">?</text></svg>
        <svg width="9" height="17" viewBox="0 0 9 17" className="ml-[11px]"><path d="M.5 3.500h5v3h-5zM3 3V.5h5.500v4H6" fill="none" stroke="#222" /><path d="M2 13h5l-2.500 2.800z" fill="#111" /></svg>
      </div>
      <div className="ml-[3px] flex h-[38px] w-[253px] shrink-0 items-center border border-t-[#85837c] border-r-[#fff] border-b-[#fff] border-l-[#85837c] pl-[6px]">
        <Polar size={16} />
        <div className="ml-[8px]"><Browser360 size={16} light="#5cc13a" dark="#3fa228" /></div>
        <svg width="17" height="17" viewBox="0 0 17 17" className="ml-[7px] shrink-0"><path d="M1.500 1v15" stroke="#777" strokeWidth="1.500" /><path d="M3 2q3-1.500 5 0t5 0v7q-3 1.500-5 0t-5 0z" fill="#fff" stroke="#777" /><circle cx="11.500" cy="11.500" r="5" fill="#d5312e" /><path d="M9.500 9.500l4 4M13.500 9.500l-4 4" stroke="#fff" strokeWidth="1.500" /></svg>
        <svg width="15" height="16" viewBox="0 0 15 16" className="ml-[8px] shrink-0"><rect x=".5" y="1" width="14" height="10" fill="#fff" stroke="#555" /><path d="M0 2.500h15" stroke="#3366bb" strokeWidth="3" /><circle cx="8" cy="7.500" r="3" fill="#cde6fa" stroke="#555" /><path d="M6 10l-5 5" stroke="#333" strokeWidth="2" /></svg>
        <svg width="16" height="16" viewBox="0 0 16 16" className="ml-[9px] shrink-0"><rect x="5.500" y="4.500" width="9.500" height="8" fill="#d5d8d8" stroke="#555" /><path d="M1 1v4q0 1.500 2 1.500T5 5V1M3 6v8h11" fill="none" stroke="#666" strokeWidth="1.300" /><path d="M7 14.500h8" stroke="#555" strokeWidth="1.500" /></svg>
        <svg width="15" height="15" viewBox="0 0 15 15" className="ml-[8px] shrink-0"><circle cx="7.500" cy="7.500" r="6.500" fill="#dbe8f8" /><path d="M1 7A6.500 6.500 0 0 1 14 7q-6 3-13 0z" fill="#3c80d8" /><path d="M5 11h6v3.500H4z" fill="#2457a8" /></svg>
        <svg width="15" height="14" viewBox="0 0 15 14" className="ml-[8px] shrink-0" fill="none" stroke="#777"><path d="M1 5v4h2l4 4V1L3 5z" fill="#f5f5f5" /><path d="M9.500 4.500q1.500 2.500 0 5M12 2.500q3 4.500 0 9" stroke="#888" /></svg>
        <div className={`ml-[11px] flex w-[54px] flex-col items-center leading-[16px] ${LATIN}`}>
          <span>15:25</span>
          <span>2019/5/27</span>
        </div>
        <svg width="15" height="12" viewBox="0 0 15 12" className="ml-[6px] shrink-0"><path d="M0 0h15v10H0z" fill="#2f6fc4" /><path d="M0 0h15L3 8H0z" fill="#5c9be0" /><path d="M0 10.500h15" stroke="#222" strokeWidth="2" /></svg>
      </div>
    </div>
  );
}

export default function App() {
  return (
    <div className="relative flex h-[900px] w-[1440px] flex-col overflow-hidden bg-[#fdfdfd]">
      <TabStrip />
      <AddressBar />
      <div className="flex h-[766px] shrink-0 overflow-hidden">
        <LeftRail />
        <div className="flex flex-1 bg-[#f1f2f2] pl-[88px]">
          <BlogSide />
          <div className="w-2 shrink-0" />
          <Article />
          <RightRail />
        </div>
        <Scrollbar />
      </div>
      <StatusBar />
      <div className="h-px" />
      <Taskbar />

      <div className="absolute top-0 left-[468px] h-[2px] w-[501px] rounded-b-[3px] border-b border-[#aaa] bg-[#ddd]" />
      <div className="absolute top-[4px] left-[11px] flex h-[50px] w-[50px] items-center justify-center rounded-full bg-white shadow-[0_1px_4px_rgba(0,0,0,0.25)]">
        <Browser360 size={35} light="#1fce3c" dark="#14b84e" />
      </div>
      <SideAd />
      <PermissionPopup />
    </div>
  );
}
